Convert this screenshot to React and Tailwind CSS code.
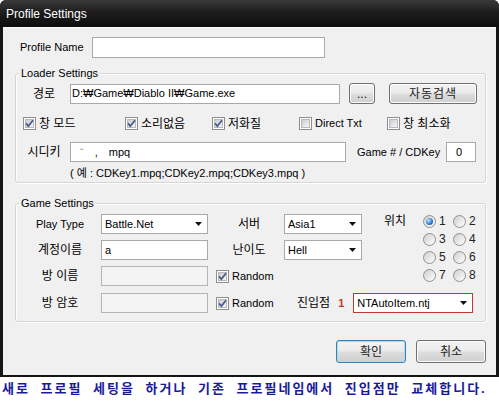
import React from 'react';

// Vista style "Profile Settings" dialog

function Check({ checked }) {
  return (
    <span className="relative w-[13px] h-[13px] shrink-0 border border-[#8f8f8f] bg-white p-[1px] flex">
      <span className="flex-1 border border-[#b7b9bc] bg-[linear-gradient(135deg,#c9ccd1,#f7f7f7)]" />
      {checked && (
        <svg className="absolute inset-0" width="11" height="11" viewBox="0 0 11 11">
          <path d="M2 5.3 L4.4 8 L9 2.3" fill="none" stroke="#4a5d8a" strokeWidth="1.8" />
        </svg>
      )}
    </span>
  );
}

function Radio({ on, label }) {
  return (
    <span className="flex items-center gap-[3px] w-[30px] h-[18px]">
      <span className="w-[13px] h-[13px] shrink-0 rounded-full border border-[#8f8f8f] bg-[linear-gradient(135deg,#cfcfcf,#ffffff)] flex items-center justify-center">
        {on && (
          <span className="w-[7px] h-[7px] rounded-full bg-[radial-gradient(circle_at_35%_35%,#bfe6ff,#2a73c9_60%,#184a8c)]" />
        )}
      </span>
      <span className="text-[12px] text-[#222]">{label}</span>
    </span>
  );
}

function Combo({ value, w, red }) {
  return (
    <div
      className={`${w} h-[20px] bg-white border ${red ? 'border-[#c0392b]' : 'border-[#a9a9a9]'} flex items-center pl-[3px] pr-[5px] text-[11px]`}
    >
      <span className="flex-1">{value}</span>
      <svg width="7" height="4" viewBox="0 0 7 4">
        <path d="M0 0H7L3.5 4Z" fill="#111" />
      </svg>
    </div>
  );
}

function Btn({ children, w, primary }) {
  return (
    <div
      className={`${w} h-[21px] rounded-[3px] border ${primary ? 'border-[#3c7fb1] shadow-[inset_0_0_0_1px_#a9dbf1]' : 'border-[#707070] shadow-[inset_0_0_0_1px_#fbfbfb]'} bg-[linear-gradient(#f3f3f3,#ebebeb_48%,#dddddd_52%,#cfcfcf)] flex items-center justify-center text-[12px] text-[#222]`}
    >
      {children}
    </div>
  );
}

function Group({ title, className, children }) {
  return (
    <div className={`relative border border-[#d5d5d5] rounded-[3px] shadow-[inset_1px_1px_0_#fff,1px_1px_0_#fff] ${className}`}>
      <span className="absolute -top-[8px] left-[3px] px-[2px] bg-[#f0f0f0] text-[11px] leading-[14px]">{title}</span>
      {children}
    </div>
  );
}

export default function App() {
  return (
    <div className="w-[499px] h-[418px] bg-white font-['Liberation_Sans','Noto_Sans_CJK_KR',sans-serif] text-[11px] text-black">
      {/* window */}
      <div className="h-[377px] flex flex-col rounded-t-[6px] overflow-hidden bg-[#161616]">
        <div className="h-[27px] shrink-0 flex items-center pl-[6px] bg-[linear-gradient(#3a3a3a,#1d1d1d_45%,#0e0e0e)] text-white text-[12px]">
          Profile Settings
        </div>

        <div className="flex-1 mx-[3px] mb-[2px] bg-[#f0f0f0] border-t border-[#fbfbfb] pt-[9px]">
          {/* profile name */}
          <div className="flex items-center pl-[17px]">
            <span className="w-[72px]">Profile Name</span>
            <div className="w-[233px] h-[21px] bg-white border border-[#a9a9a9]" />
          </div>

          {/* loader settings */}
          <Group title="Loader Settings" className="ml-[12px] mt-[15px] w-[471px] h-[110px]">
            <div className="flex items-center pl-[4px] pt-[9px]">
              <span className="w-[48px] text-center text-[12px]">경로</span>
              <div className="ml-[2px] w-[270px] h-[20px] bg-white border border-[#a9a9a9] flex items-center pl-[1px] text-[11px]">
                D:₩Game₩Diablo II₩Game.exe
              </div>
              <Btn w="ml-[9px] w-[26px]">...</Btn>
              <Btn w="ml-[14px] w-[88px]">
                <span className="tracking-[1px]">자동검색</span>
              </Btn>
            </div>

            <div className="flex items-center h-[13px] mt-[13px] pl-[7px] text-[12px]">
              <span className="w-[102px] flex items-center gap-[3px]"><Check checked />창 모드</span>
              <span className="w-[87px] flex items-center gap-[3px]"><Check checked />소리없음</span>
              <span className="w-[87px] flex items-center gap-[3px]"><Check checked />저화질</span>
              <span className="w-[88px] flex items-center gap-[3px] text-[11px]"><Check />Direct Txt</span>
              <span className="flex items-center gap-[3px]"><Check />창 최소화</span>
            </div>

            <div className="flex items-center pl-[4px] mt-[12px]">
              <span className="w-[48px] text-center text-[12px]">시디키</span>
              <div className="ml-[2px] w-[276px] h-[20px] bg-white border border-[#a9a9a9] flex items-center text-[11px]">
                <span className="ml-[9px] text-[#999]">˘</span>
                <span className="ml-[11px]">,</span>
                <span className="ml-[11px]">mpq</span>
              </div>
              <span className="ml-[11px] w-[89px]">Game # / CDKey</span>
              <div className="w-[30px] h-[20px] bg-white border border-[#a9a9a9] flex items-center pl-[9px]">0</div>
            </div>

            <div className="pl-[54px] mt-[5px] leading-[12px] text-[11px]">( 예 : CDKey1.mpq;CDKey2.mpq;CDKey3.mpq )</div>
          </Group>

          {/* game settings */}
          <Group title="Game Settings" className="ml-[12px] mt-[20px] w-[471px] h-[119px]">
            <div className="flex pt-[8px]">
              <div className="w-[368px] pl-[4px] mt-[2px] flex flex-col gap-[6px]">
                <div className="flex items-center h-[20px]">
                  <span className="w-[80px] text-center">Play Type</span>
                  <Combo w="ml-[1px] w-[107px]" value="Battle.Net" />
                  <span className="ml-[6px] w-[70px] text-center text-[12px]">서버</span>
                  <Combo w="w-[78px]" value="Asia1" />
                </div>
                <div className="flex items-center h-[20px]">
                  <span className="w-[80px] text-center text-[12px]">계정이름</span>
                  <div className="ml-[1px] w-[107px] h-[20px] bg-white border border-[#a9a9a9] flex items-center pl-[3px]">a</div>
                  <span className="ml-[6px] w-[70px] text-center text-[12px]">난이도</span>
                  <Combo w="w-[78px]" value="Hell" />
                </div>
                <div className="flex items-center h-[20px]">
                  <span className="w-[80px] text-center text-[12px]">방 이름</span>
                  <div className="ml-[1px] w-[107px] h-[20px] bg-[#f4f4f4] border border-[#b5b5b5]" />
                  <span className="ml-[8px] flex items-center gap-[3px]"><Check checked />Random</span>
                </div>
              </div>

              <div className="flex items-start">
                <span className="h-[18px] flex items-center text-[12px]">위치</span>
                <div className="ml-[17px] grid grid-cols-2">
                  <Radio on label="1" />
                  <Radio label="2" />
                  <Radio label="3" />
                  <Radio label="4" />
                  <Radio label="5" />
                  <Radio label="6" />
                  <Radio label="7" />
                  <Radio label="8" />
                </div>
              </div>
            </div>

            <div className="flex items-center h-[20px] mt-[7px] pl-[4px]">
              <span className="w-[80px] text-center text-[12px]">방 암호</span>
              <div className="ml-[1px] w-[107px] h-[20px] bg-[#f4f4f4] border border-[#b5b5b5]" />
              <span className="ml-[8px] w-[81px] flex items-center gap-[3px]"><Check checked />Random</span>
              <span className="text-[12px]">진입점</span>
              <span className="ml-[8px] font-bold text-[#c0392b]">1</span>
              <Combo w="ml-[9px] w-[120px]" value="NTAutoItem.ntj" red />
            </div>
          </Group>

          {/* buttons */}
          <div className="flex justify-end gap-[10px] pr-[10px] mt-[18px]">
            <Btn w="w-[70px] h-[23px]" primary>확인</Btn>
            <Btn w="w-[70px] h-[23px]">취소</Btn>
          </div>
        </div>
      </div>

      <p className="mt-[4px] pl-[2px] leading-[16px] text-[13px] font-bold tracking-[2px] [word-spacing:5px] text-[#1a1a9c]">
        새로 프로필 세팅을 하거나 기존 프로필네임에서 진입점만 교체합니다.
      </p>
    </div>
  );
}
